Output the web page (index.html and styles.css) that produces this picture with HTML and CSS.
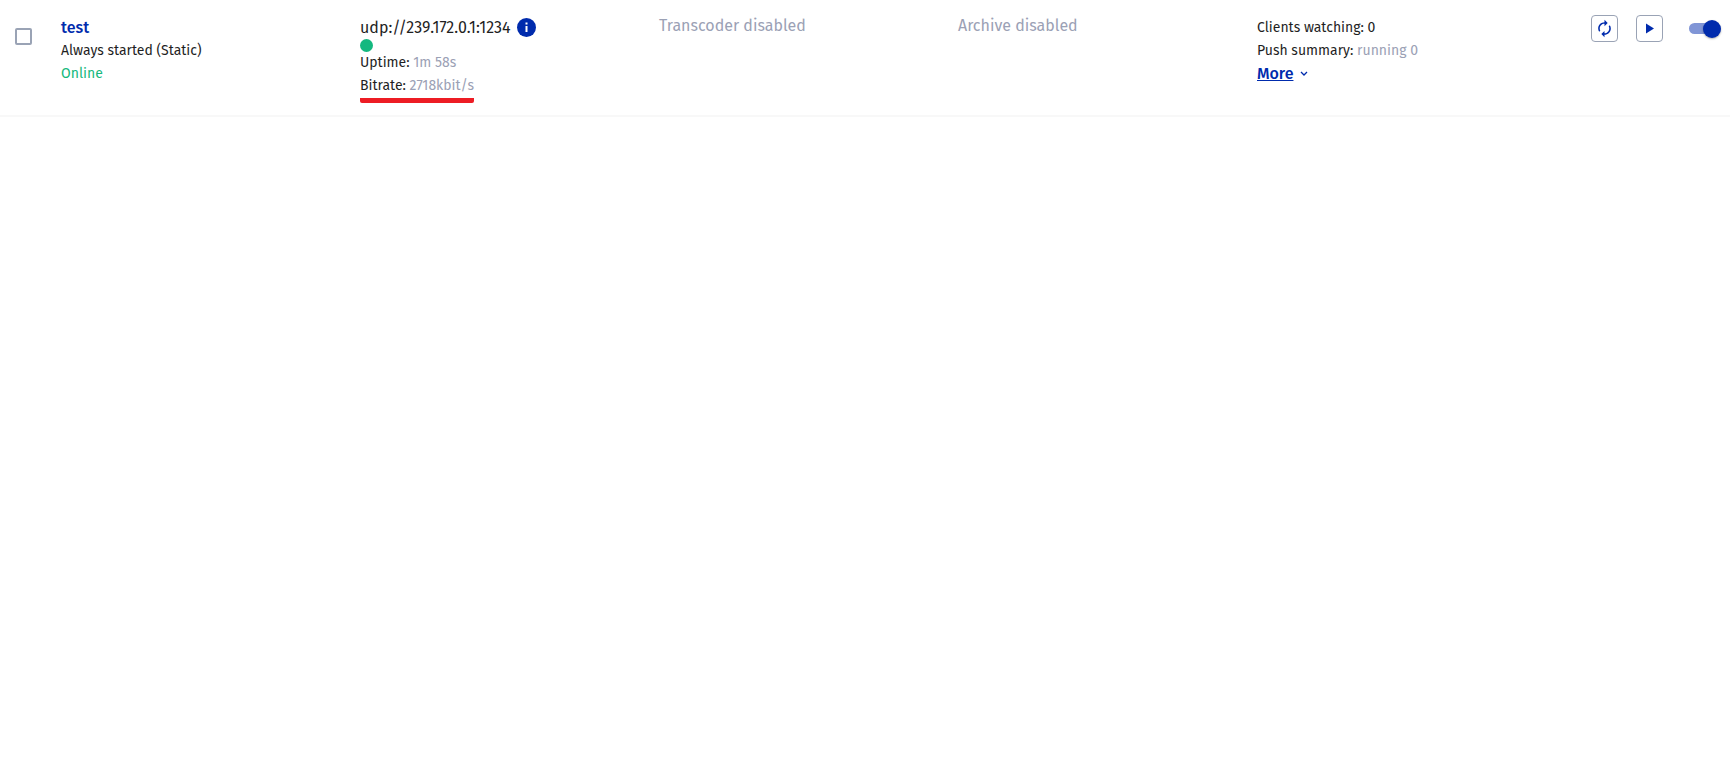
FILE: index.html
```
<!DOCTYPE html>
<html lang="en">
<head>
  <meta charset="utf-8">
  <title>Streams</title>
  <link rel="stylesheet" href="styles.css">
</head>
<body>
  <div class="stream-row">
    <div class="select-cell">
      <input type="checkbox" class="checkbox" aria-label="Select test">
    </div>

    <div class="cell">
      <a href="#" class="stream-name">test</a>
      <div class="line">Always started (Static)</div>
      <div class="line online">Online</div>
    </div>

    <div class="cell">
      <div class="source">
        <span>udp://239.172.0.1:1234</span>
        <button type="button" class="info" aria-label="Source info">
          <svg width="19" height="19" viewBox="0 0 19 19">
            <circle cx="9.5" cy="9.5" r="9.5" fill="#002bad"/>
            <path d="M8.5 4.5h2v2h-2zM8.5 8h2v6h-2z" fill="#fff"/>
          </svg>
        </button>
      </div>
      <div class="status"><span class="dot"></span></div>
      <div class="line">Uptime: <span class="muted">1m 58s</span></div>
      <div class="line"><span class="marked">Bitrate: <span class="muted">2718kbit/s</span></span></div>
    </div>

    <div class="cell feature">Transcoder disabled</div>
    <div class="cell feature">Archive disabled</div>

    <div class="cell">
      <div class="line">Clients watching: 0</div>
      <div class="line">Push summary: <span class="muted">running 0</span></div>
      <button type="button" class="more">
        <span class="more-text">More</span>
        <svg width="8" height="6" viewBox="0 0 8 6">
          <path d="M1 1l3 3 3-3" fill="none" stroke="#002bad" stroke-width="1.3"/>
        </svg>
      </button>
    </div>

    <div class="actions">
      <button type="button" class="icon-button" aria-label="Restart">
        <svg width="19" height="19" viewBox="0 0 24 24">
          <path d="M12 6v3l4-4-4-4v3c-4.42 0-8 3.58-8 8 0 1.57.46 3.03 1.24 4.26L6.7 14.8c-.45-.83-.7-1.79-.7-2.8 0-3.31 2.69-6 6-6zm6.76 1.74L17.3 9.2c.44.84.7 1.79.7 2.8 0 3.31-2.69 6-6 6v-3l-4 4 4 4v-3c4.42 0 8-3.58 8-8 0-1.57-.46-3.03-1.24-4.26z" fill="#002bad"/>
        </svg>
      </button>
      <button type="button" class="icon-button" aria-label="Play">
        <svg width="19" height="19" viewBox="0 0 19 19">
          <path d="M6 4.5v10l8-5z" fill="#002bad"/>
        </svg>
      </button>
      <input type="checkbox" class="switch" role="switch" aria-label="Stream enabled" checked>
    </div>
  </div>
</body>
</html>
```
FILE: styles.css
```
body {
  margin: 0;
  background-color: #fff;
  color: #1f1f1f;
  font-family: "Fira Sans", Roboto, sans-serif;
  font-size: 14px;
  line-height: 23px;
}
button {
  padding: 0;
  border: none;
  background: none;
  font-family: inherit;
  cursor: pointer;
}
.stream-row {
  display: grid;
  grid-template-columns: 61px repeat(5, 1fr) 174px;
  min-height: 100px;
  padding-top: 15px;
  border-bottom: 2px solid #f8f8f8;
}
.select-cell {
  padding: 13px 0 0 15px;
}
.checkbox {
  display: block;
  appearance: none;
  box-sizing: border-box;
  width: 17px;
  height: 17px;
  margin: 0;
  border: 2px solid #9aa3b5;
  border-radius: 2px;
}
.checkbox:checked {
  background-color: #002bad;
}
.cell {
  padding-top: 1px;
}
.stream-name {
  display: block;
  color: #002bad;
  font-size: 16px;
  font-weight: 500;
  text-decoration: none;
}
.online {
  color: #14b87c;
}
.muted,
.feature {
  color: #9ba1b5;
}
.feature {
  font-size: 16px;
  line-height: 19px;
}
.source {
  display: flex;
  align-items: center;
  gap: 7px;
  font-size: 16px;
}
.info {
  display: flex;
}
.status {
  height: 12px;
}
.dot {
  display: block;
  width: 13px;
  height: 13px;
  border-radius: 50%;
  background-color: #14b87f;
}
.marked {
  display: inline-block;
  padding-bottom: 1px;
  border-bottom: 5px solid #ed1c24;
  border-radius: 2px;
}
.more {
  display: flex;
  align-items: center;
  gap: 7px;
  color: #002bad;
  font-size: 16px;
  font-weight: 500;
  line-height: 23px;
}
.more-text {
  text-decoration: underline;
}
.actions {
  display: flex;
  align-items: flex-start;
  gap: 18px;
  padding-left: 35px;
}
.icon-button {
  display: flex;
  align-items: center;
  justify-content: center;
  box-sizing: border-box;
  width: 27px;
  height: 27px;
  border: 1px solid #9aa3b5;
  border-radius: 4px;
}
.switch {
  appearance: none;
  position: relative;
  width: 31px;
  height: 11px;
  margin: 8px 0 0 8px;
  border-radius: 6px;
  background-color: #ccc;
  cursor: pointer;
}
.switch::before {
  content: "";
  position: absolute;
  top: -3px;
  left: 0;
  width: 18px;
  height: 18px;
  border-radius: 50%;
  background-color: #fff;
  box-shadow: 0 1px 2px rgba(0,0,0,0.3);
}
.switch:checked {
  background-color: #8095d6;
}
.switch:checked::before {
  left: 14px;
  background-color: #002bad;
}
```
